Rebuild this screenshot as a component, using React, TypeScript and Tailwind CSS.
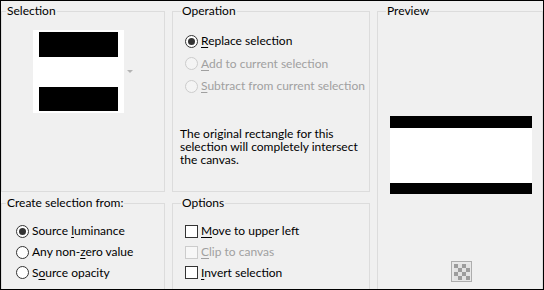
import React from "react";

const font = { fontFamily: "Lato, 'Liberation Sans', sans-serif" };

function Radio({ checked, disabled, children }: { checked?: boolean; disabled?: boolean; children: React.ReactNode }) {
  return (
    <div className="flex h-[22.5px] items-center">
      <div
        className={
          disabled
            ? "flex h-[13px] w-[13px] items-center justify-center rounded-full border border-[#cccccc] bg-[#f4f4f4]"
            : "flex h-[13px] w-[13px] items-center justify-center rounded-full border border-[#333333] bg-white"
        }
      >
        {checked && <div className="h-[7px] w-[7px] rounded-full bg-[#333333]" />}
      </div>
      <span className={disabled ? "ml-[3px] text-[#a0a0a0]" : "ml-[3px] text-black"}>{children}</span>
    </div>
  );
}

function Radio2({ checked, children }: { checked?: boolean; children: React.ReactNode }) {
  return (
    <div className="flex h-[20.7px] items-center">
      <div className="flex h-[13px] w-[13px] items-center justify-center rounded-full border border-[#333333] bg-white">
        {checked && <div className="h-[7px] w-[7px] rounded-full bg-[#333333]" />}
      </div>
      <span className="ml-[3px] text-black">{children}</span>
    </div>
  );
}

function Check({ disabled, children }: { disabled?: boolean; children: React.ReactNode }) {
  return (
    <div className="flex h-[20.7px] items-center">
      <div
        className={
          disabled
            ? "h-[13px] w-[13px] border border-[#cccccc] bg-[#f7f7f7]"
            : "h-[13px] w-[13px] border border-[#333333] bg-white"
        }
      />
      <span className={disabled ? "ml-[3px] text-[#a0a0a0]" : "ml-[3px] text-black"}>{children}</span>
    </div>
  );
}

function K({ children }: { children: React.ReactNode }) {
  return <span className="underline underline-offset-[2px]">{children}</span>;
}

function Checker() {
  const cells = [];
  for (let r = 0; r < 4; r++) {
    for (let c = 0; c < 4; c++) {
      cells.push(
        <rect key={`${r}-${c}`} x={3 + c * 4} y={3 + r * 4} width={4} height={4} fill={(r + c) % 2 === 0 ? "#9c9c9c" : "#e2e2e2"} />
      );
    }
  }
  return (
    <svg width="21" height="21" viewBox="0 0 21 21">
      <rect x="0.5" y="0.5" width="20" height="20" fill="#e8e8e8" stroke="#adadad" />
      {cells}
    </svg>
  );
}

export default function App() {
  return (
    <div
      className="h-[290px] w-[544px] overflow-hidden border border-black bg-[#f0f0f0] text-[12px] leading-[16px] text-black"
      style={font}
    >
      <div className="flex h-full">
        {/* Column 1 */}
        <div className="flex w-[164px] shrink-0 flex-col">
          <fieldset className="mt-[2px] h-[189px] shrink-0 border border-[#dcdcdc]">
            <legend className="ml-[4px] px-[1px] leading-[16px]">Selection</legend>
            <div className="ml-[31px] mt-[11px] flex items-center">
              <div className="flex h-[83px] w-[91px] flex-col bg-white pl-[6px] pt-[2px]">
                <div className="h-[25px] w-[79px] bg-black" />
                <div className="h-[30px]" />
                <div className="h-[24px] w-[79px] bg-black" />
              </div>
              <svg width="6" height="4" viewBox="0 0 6 4" className="ml-[3px]">
                <path d="M0 0 L6 0 L3 3 Z" fill="#b4b4b4" />
              </svg>
            </div>
          </fieldset>
          <fieldset className="mt-[3px] h-[120px] shrink-0 border border-[#dcdcdc]">
            <legend className="ml-[4px] px-[1px] leading-[16px]">Create selection from:</legend>
            <div className="ml-[14px] mt-[10px] flex flex-col">
              <Radio2 checked>
                Source <K>l</K>uminance
              </Radio2>
              <Radio2>
                Any non-<K>z</K>ero value
              </Radio2>
              <Radio2>
                S<K>o</K>urce opacity
              </Radio2>
            </div>
          </fieldset>
        </div>

        {/* Column 2 */}
        <div className="ml-[7px] flex w-[198px] shrink-0 flex-col">
          <fieldset className="mt-[2px] h-[189px] shrink-0 border border-[#dcdcdc]">
            <legend className="ml-[8px] px-[1px] leading-[16px]">Operation</legend>
            <div className="ml-[12px] mt-[11px] flex flex-col">
              <Radio checked>
                <K>R</K>eplace selection
              </Radio>
              <Radio disabled>
                <K>A</K>dd to current selection
              </Radio>
              <Radio disabled>
                <K>S</K>ubtract from current selection
              </Radio>
            </div>
            <p className="ml-[7px] mt-[29px] w-[185px] leading-[13px]">
              The original rectangle for this selection will completely intersect the canvas.
            </p>
          </fieldset>
          <fieldset className="mt-[3px] h-[120px] shrink-0 border border-[#dcdcdc]">
            <legend className="ml-[8px] px-[1px] leading-[16px]">Options</legend>
            <div className="ml-[12px] mt-[10px] flex flex-col">
              <Check>
                <K>M</K>ove to upper left
              </Check>
              <Check disabled>
                <K>C</K>lip to canvas
              </Check>
              <Check>
                <K>I</K>nvert selection
              </Check>
            </div>
          </fieldset>
        </div>

        {/* Column 3 */}
        <div className="ml-[7px] flex w-[166px] shrink-0 flex-col">
          <fieldset className="mt-[2px] h-[320px] shrink-0 border border-[#dcdcdc]">
            <legend className="ml-[8px] px-[1px] leading-[16px]">Preview</legend>
            <div className="ml-[12px] mt-[97px] flex h-[78px] w-[142px] flex-col bg-white">
              <div className="h-[12px] bg-black" />
              <div className="h-[55px]" />
              <div className="h-[11px] bg-black" />
            </div>
            <div className="ml-[73px] mt-[67px] flex">
              <Checker />
            </div>
          </fieldset>
        </div>
      </div>
    </div>
  );
}
